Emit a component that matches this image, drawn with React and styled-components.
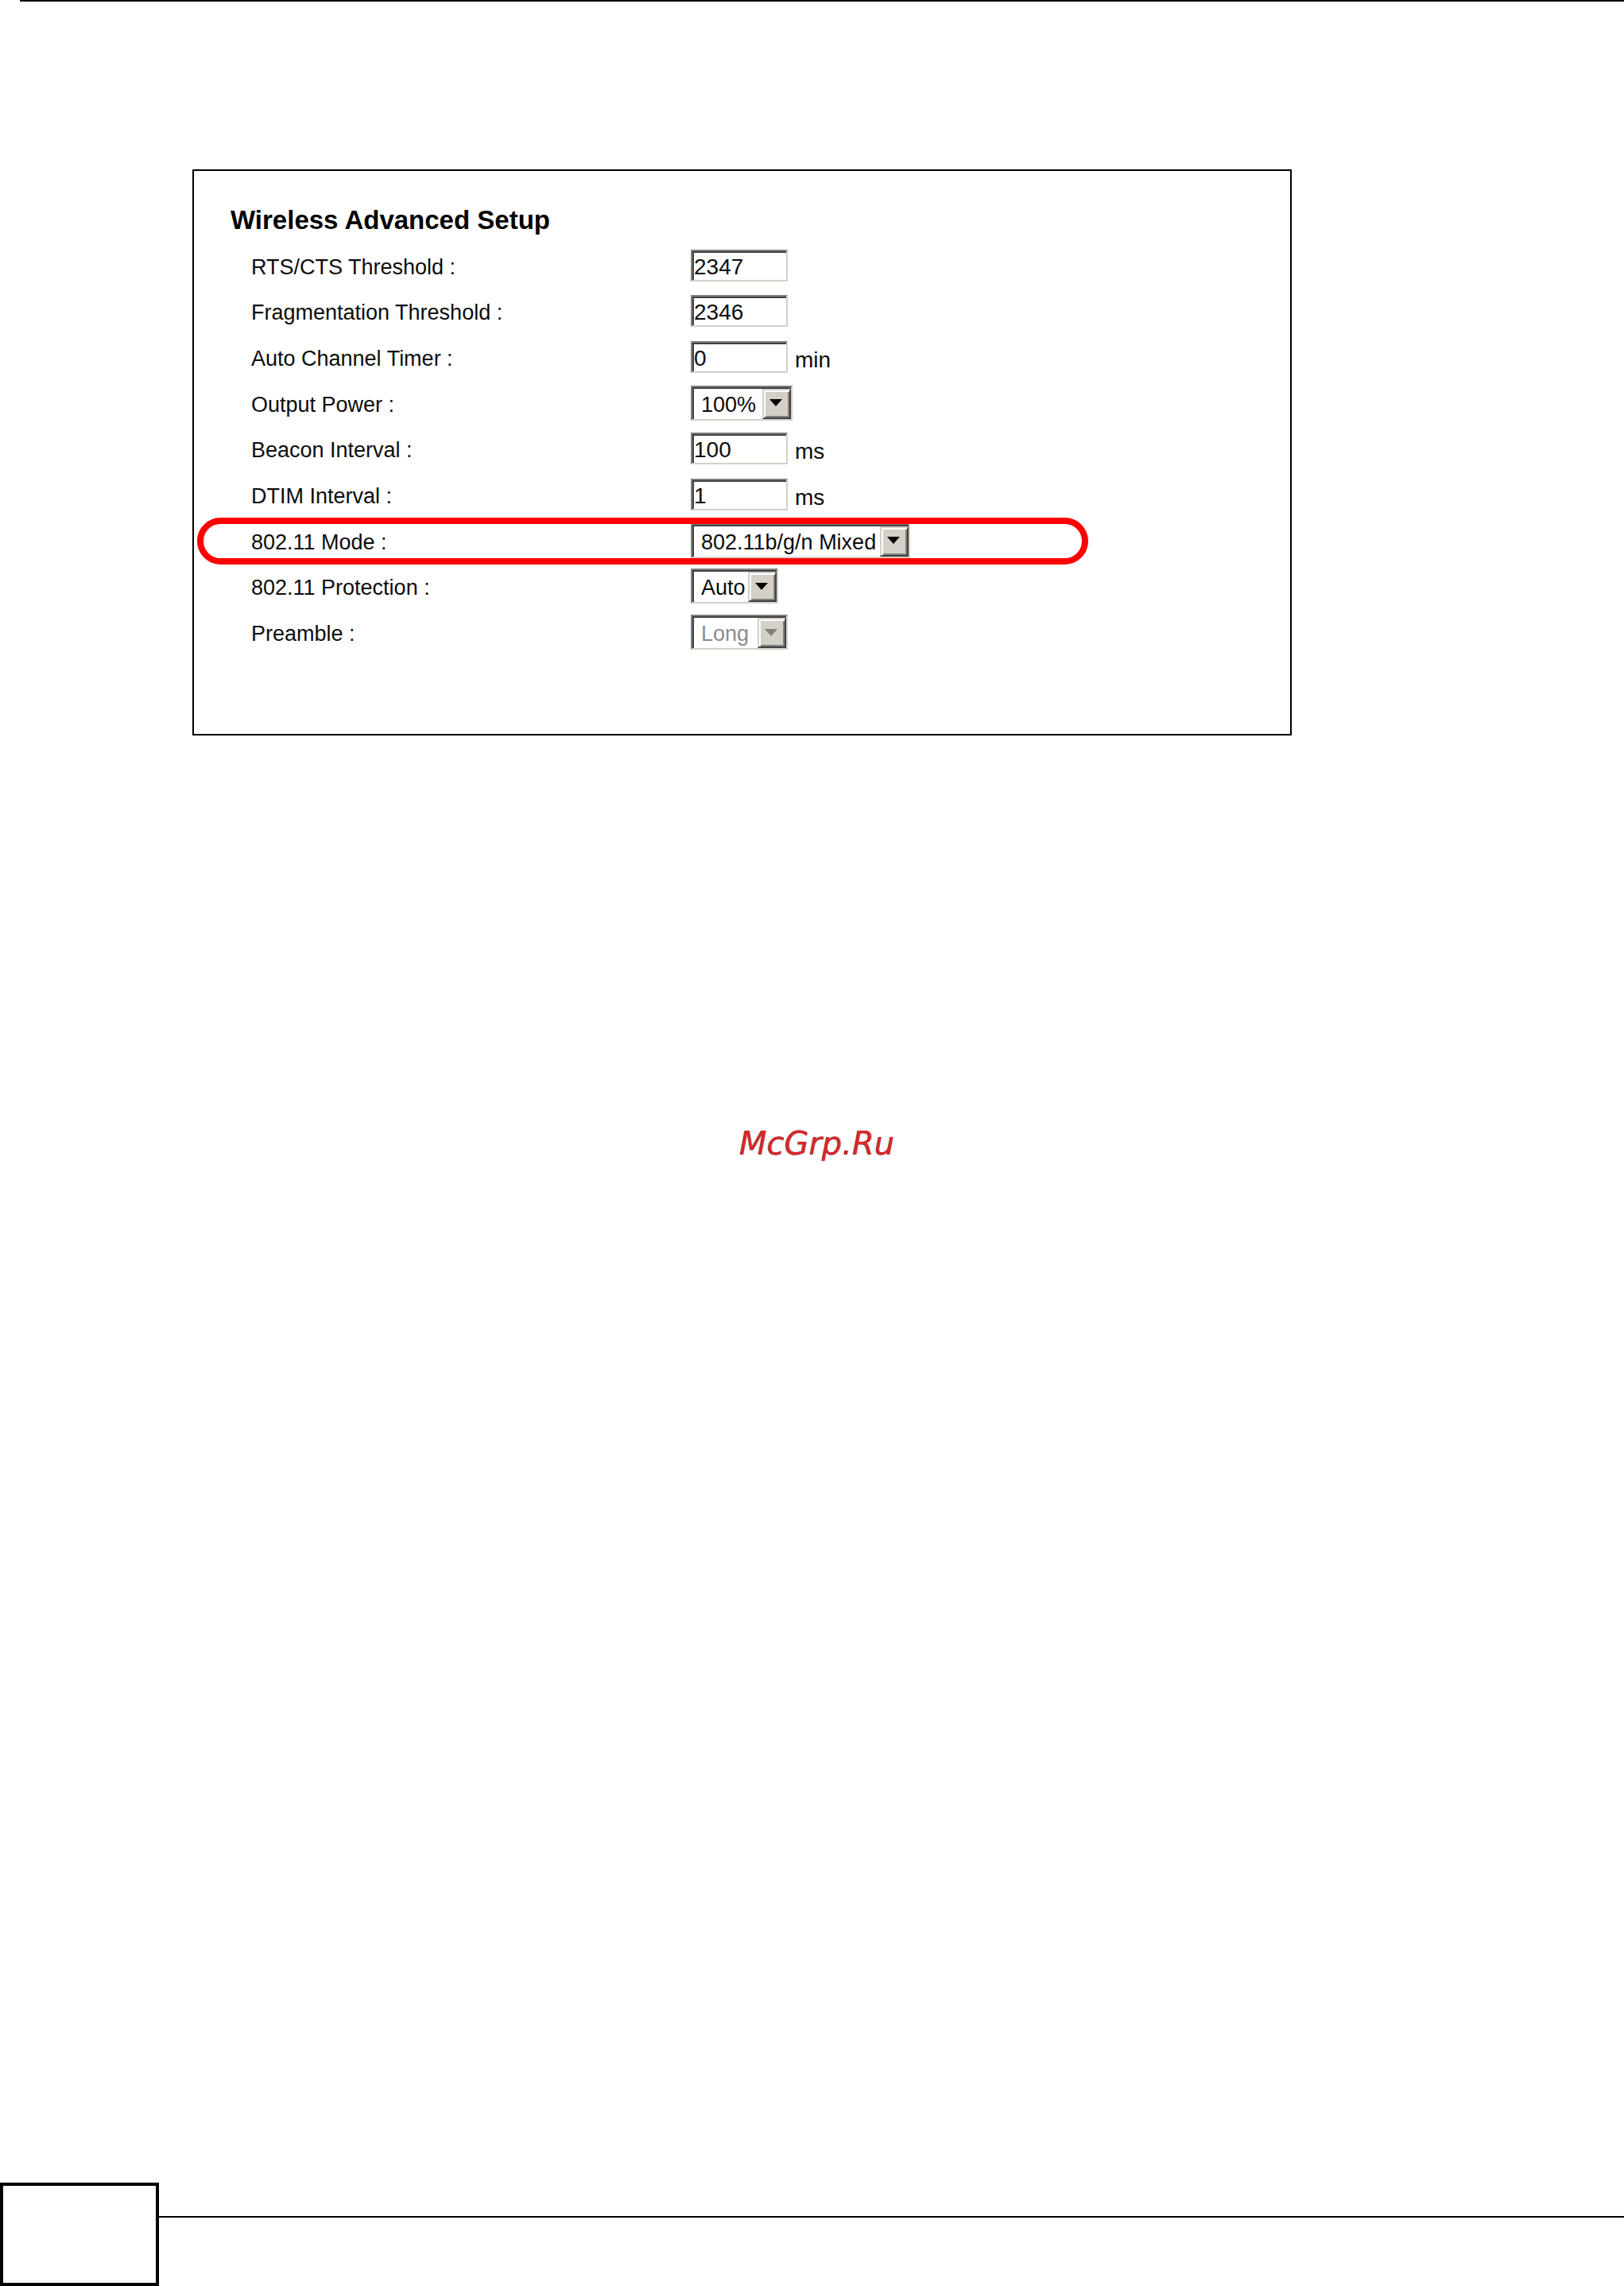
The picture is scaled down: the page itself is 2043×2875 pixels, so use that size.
import React, { useState } from "react";
import styled, { createGlobalStyle } from "styled-components";

const GlobalStyle = createGlobalStyle`
  * {
    box-sizing: border-box;
  }
  body {
    margin: 0;
    background: #fff;
    color: #0c0c0c;
    font-family: "Liberation Sans", Arial, sans-serif;
  }
`;

const Page = styled.div`
  display: flex;
  flex-direction: column;
  min-height: 100vh;
`;

const TopRule = styled.div`
  height: 2px;
  margin-left: 25px;
  background: #000;
`;

const Panel = styled.form`
  margin: 211px 418px 0 242px;
  padding: 42px 0 99px;
  border: 2px solid #000;
`;

const Title = styled.h1`
  margin: 0 0 8px;
  padding-left: 46px;
  font-size: 33px;
  line-height: 40px;
  color: #000;
`;

const Rows = styled.div`
  display: grid;
  grid-auto-rows: 1fr;
  min-height: 519px;
`;

const Row = styled.div`
  position: relative;
  display: grid;
  grid-template-columns: 553px 1fr;
  align-items: center;
  padding-left: 72px;
  font-size: 28px;
  line-height: 32px;
`;

const Label = styled.label`
  padding-top: 4px;
  font-size: 27px;
`;

const Field = styled.div`
  display: flex;
  align-items: center;
  gap: 9px;
`;

const TextBox = styled.input`
  width: 122px;
  height: 40px;
  padding: 4px 0 0;
  border: 2px solid;
  border-color: #808080 #d4d0c8 #d4d0c8 #808080;
  border-radius: 0;
  outline: none;
  background: #fff;
  box-shadow: inset 2px 2px 0 #404040;
  text-indent: 2px;
  font: inherit;
  color: inherit;
`;

const Unit = styled.span`
  padding-top: 8px;
`;

const SelectBox = styled.div`
  position: relative;
  width: ${(props) => props.$width}px;
  height: 44px;
  border: 2px solid;
  border-color: #808080 #d4d0c8 #d4d0c8 #808080;
  box-shadow: inset 2px 2px 0 #404040;
`;

const Select = styled.select`
  appearance: none;
  width: 100%;
  height: 100%;
  padding: 4px 0 0 11px;
  border: 0;
  outline: none;
  background: transparent;
  font-family: inherit;
  font-size: 27px;
  color: inherit;

  &:disabled {
    color: #8c8c8c;
    opacity: 1;
  }
`;

const Arrow = styled.span`
  position: absolute;
  top: 2px;
  right: 0;
  bottom: 0;
  display: flex;
  align-items: center;
  justify-content: center;
  width: 36px;
  padding: 0 2px 2px 0;
  border: 2px solid;
  border-color: #d4d0c8 #404040 #404040 #d4d0c8;
  background: #d4d0c8;
  box-shadow: inset 2px 2px 0 #fff, inset -2px -2px 0 #808080;
  color: ${(props) => (props.$disabled ? "#808080" : "#000")};
  pointer-events: none;
`;

const Highlight = styled.div`
  position: absolute;
  top: 0;
  left: 4px;
  width: 1121px;
  height: 59px;
  border: 8px solid #f00;
  border-radius: 30px;
  pointer-events: none;
`;

const Watermark = styled.p`
  margin: 489px 0 0;
  padding-left: 12px;
  font-family: "DejaVu Sans", Verdana, sans-serif;
  font-size: 40px;
  font-style: oblique;
  line-height: 48px;
  text-align: center;
  color: #dc2626;
  text-shadow: 0 0 1px #303040;
`;

const Footer = styled.footer`
  display: flex;
  margin-top: auto;
`;

const PageNumber = styled.div`
  width: 200px;
  height: 130px;
  border: 4px solid #000;
`;

const FooterRule = styled.div`
  flex: 1;
  height: 2px;
  margin-top: 42px;
  background: #000;
`;

const fields = [
  { id: "rts", label: "RTS/CTS Threshold :", value: "2347" },
  { id: "fragmentation", label: "Fragmentation Threshold :", value: "2346" },
  { id: "timer", label: "Auto Channel Timer :", value: "0", unit: "min" },
  { id: "power", label: "Output Power :", options: ["100%"], width: 128 },
  { id: "beacon", label: "Beacon Interval :", value: "100", unit: "ms" },
  { id: "dtim", label: "DTIM Interval :", value: "1", unit: "ms" },
  {
    id: "mode",
    label: "802.11 Mode :",
    options: ["802.11b/g/n Mixed"],
    width: 276,
    highlighted: true,
  },
  { id: "protection", label: "802.11 Protection :", options: ["Auto"], width: 110 },
  {
    id: "preamble",
    label: "Preamble :",
    options: ["Long"],
    width: 122,
    disabled: true,
  },
];

function DropDown({ id, options, width, disabled }) {
  return (
    <SelectBox $width={width}>
      <Select id={id} disabled={disabled}>
        {options.map((option) => (
          <option key={option}>{option}</option>
        ))}
      </Select>
      <Arrow $disabled={disabled}>
        <svg width='16' height='9' viewBox='0 0 16 9'>
          <path d='M0 0h16L8 9z' fill='currentColor' />
        </svg>
      </Arrow>
    </SelectBox>
  );
}

function NumberBox({ id, initial }) {
  const [value, setValue] = useState(initial);

  return (
    <TextBox
      id={id}
      type='text'
      value={value}
      onChange={(e) => setValue(e.target.value)}
    />
  );
}

export default function App() {
  return (
    <Page>
      <GlobalStyle />
      <TopRule />
      <Panel>
        <Title>Wireless Advanced Setup</Title>
        <Rows>
          {fields.map((field) => (
            <Row key={field.id}>
              <Label htmlFor={field.id}>{field.label}</Label>
              <Field>
                {field.options ? (
                  <DropDown {...field} />
                ) : (
                  <NumberBox id={field.id} initial={field.value} />
                )}
                {field.unit && <Unit>{field.unit}</Unit>}
              </Field>
              {field.highlighted && <Highlight />}
            </Row>
          ))}
        </Rows>
      </Panel>
      <Watermark>McGrp.Ru</Watermark>
      <Footer>
        <PageNumber />
        <FooterRule />
      </Footer>
    </Page>
  );
}
